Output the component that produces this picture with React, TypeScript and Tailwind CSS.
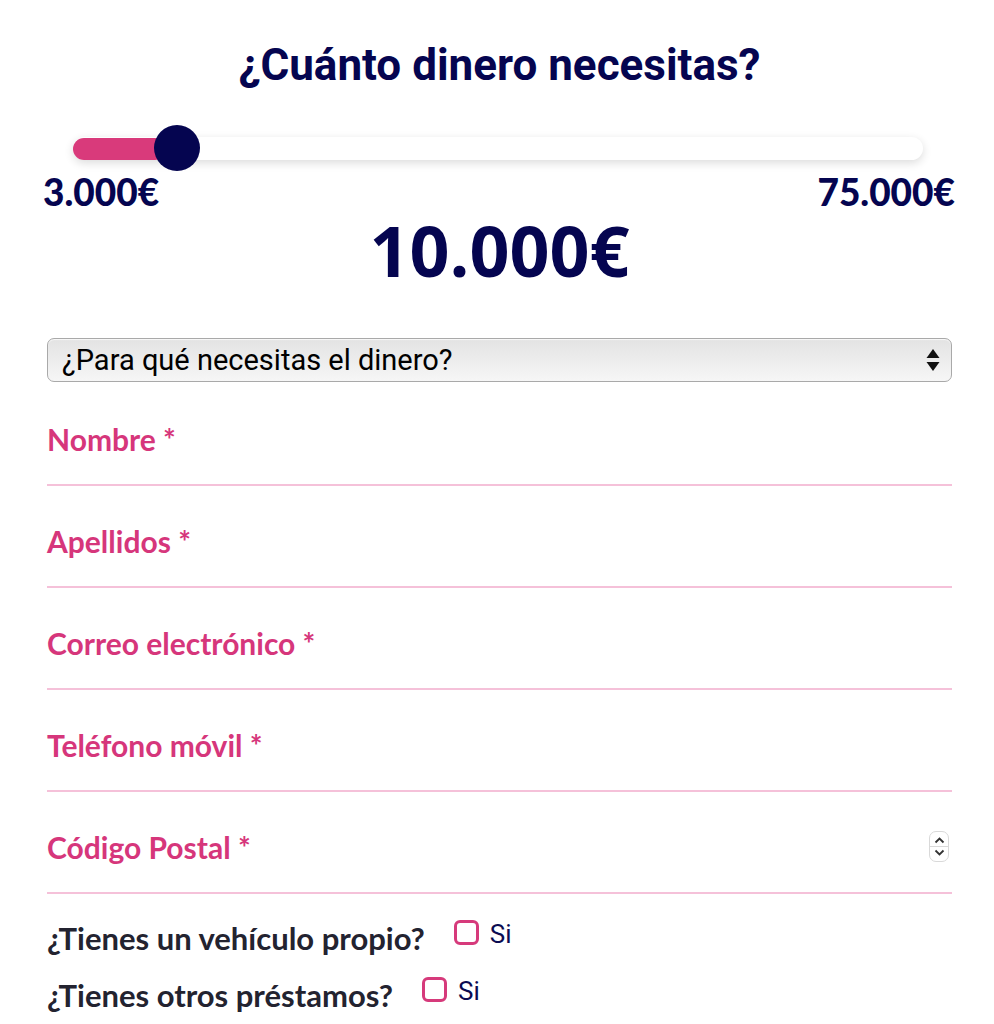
import { useState } from "react";

const fields = [
  "Nombre *",
  "Apellidos *",
  "Correo electrónico *",
  "Teléfono móvil *",
  "Código Postal *",
];

const Spinner = () => (
  <div className="flex h-[31px] w-[20px] flex-col items-center justify-center rounded-[7px] border border-[#d9d9d9] bg-white">
    <svg width="11" height="7" viewBox="0 0 11 7" fill="none">
      <path d="M1.5 5.5 L5.5 1.5 L9.5 5.5" stroke="#333" strokeWidth="1.8" />
    </svg>
    <div className="my-[2px] h-px w-full bg-[#d9d9d9]" />
    <svg width="11" height="7" viewBox="0 0 11 7" fill="none">
      <path d="M1.5 1.5 L5.5 5.5 L9.5 1.5" stroke="#333" strokeWidth="1.8" />
    </svg>
  </div>
);

const CheckRow = ({ label }: { label: string }) => {
  const [checked, setChecked] = useState(false);
  return (
    <div className="flex h-[40px] items-center">
      <span className="font-['Lato',sans-serif] text-[31px] font-bold leading-[40px] text-[#232330]">{label}</span>
      <button
        onClick={() => setChecked(!checked)}
        className="mb-[12px] ml-[29px] h-[25px] w-[25px] rounded-[6px] border-[3px] border-[#d63a7b] bg-white"
      />
      <span className="mb-[8px] ml-[11px] font-['Roboto',sans-serif] text-[26px] text-[#0b0b52]">Si</span>
    </div>
  );
};

export default function App() {
  const min = 3000;
  const max = 75000;
  const value = 10000;
  const pct = ((value - min) / (max - min)) * 100;

  return (
    <div className="min-h-screen w-[994px] bg-white pl-[47px] pr-[42px] pt-[37px]">
      <h1 className="text-center font-['Roboto',sans-serif] text-[44px] font-bold leading-[56px] text-[#050550]">
        ¿Cuánto dinero necesitas?
      </h1>

      {/* slider */}
      <div className="relative ml-[26px] mr-[29px] mt-[32px] flex h-[46px] items-center">
        <div className="relative h-[23px] w-full rounded-full bg-white shadow-[0_3px_10px_rgba(0,0,0,0.14)]">
          <div
            className="absolute left-0 top-[1px] h-[22px] rounded-full bg-[#d93a7b]"
            style={{ width: `calc(${pct}% + 10px)` }}
          />
        </div>
        <div
          className="absolute top-0 h-[46px] w-[46px] -translate-x-1/2 rounded-full bg-[#050550]"
          style={{ left: `calc(${pct}% + 21px)` }}
        />
      </div>

      <div className="-ml-[4px] -mr-[3px] mt-[-1px] flex justify-between font-['Lato',sans-serif] text-[37px] font-black leading-[44px] text-[#050550]">
        <span>3.000€</span>
        <span>75.000€</span>
      </div>

      <div className="mt-[-4px] text-center font-['Open_Sans',sans-serif] text-[70px] font-bold leading-[80px] text-[#050550]">
        10.000€
      </div>

      {/* select */}
      <div className="relative mt-[48px]">
        <select className="h-[44px] w-full appearance-none rounded-[7px] border border-[#a9a9a9] bg-gradient-to-b from-[#e3e3e3] to-[#f6f6f6] pl-[14px] font-['Roboto',sans-serif] text-[29px] leading-[40px] text-black shadow-[inset_0_1px_1px_rgba(255,255,255,0.8)]">
          <option>¿Para qué necesitas el dinero?</option>
        </select>
        <svg
          className="pointer-events-none absolute right-[12px] top-[10px]"
          width="14"
          height="24"
          viewBox="0 0 14 24"
        >
          <path d="M7 1 L13.5 10 L0.5 10 Z" fill="#111" />
          <path d="M0.5 14 L13.5 14 L7 23 Z" fill="#111" />
        </svg>
      </div>

      {/* fields */}
      <div className="mt-[2px]">
        {fields.map((f, i) => (
          <div
            key={f}
            className="flex h-[102px] items-end justify-between border-b-2 border-[#f5c1d9] pb-[27px]"
          >
            <span className="font-['Lato',sans-serif] text-[30px] font-bold leading-[36px] text-[#d6367b]">
              {f}
            </span>
            {i === 4 && (
              <div className="mb-[3px] mr-[3px]">
                <Spinner />
              </div>
            )}
          </div>
        ))}
      </div>

      <div className="mt-[24px] flex flex-col gap-[17px]">
        <CheckRow label="¿Tienes un vehículo propio?" />
        <CheckRow label="¿Tienes otros préstamos?" />
      </div>
    </div>
  );
}
